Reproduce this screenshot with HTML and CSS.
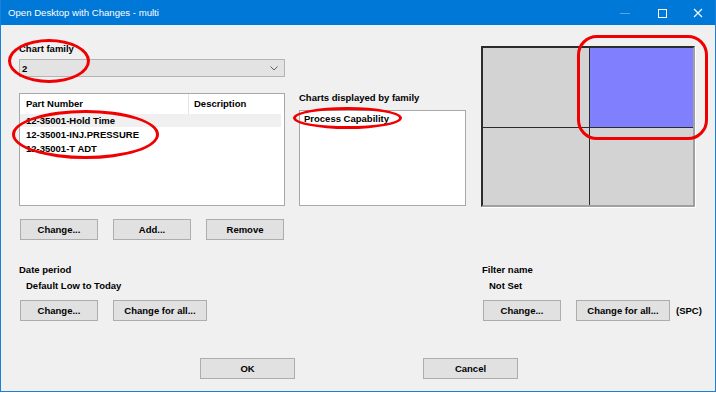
FILE: index.html
```html
<!DOCTYPE html>
<html lang="en">
<head>
    <meta charset="UTF-8">
    <title>Open Desktop with Changes - multi</title>
    <link rel="stylesheet" href="styles.css">
</head>
<body>

<div class="window">
    <div class="titlebar">
        <span class="title">Open Desktop with Changes - multi</span>
        <div class="controls">
            <span class="ctl minimize"><svg width="10" height="10" viewBox="0 0 10 10"><path d="M0 5.5h10" stroke="#5aa5e6" stroke-width="1"/></svg></span>
            <span class="ctl"><svg width="10" height="10" viewBox="0 0 10 10"><rect x="1.5" y="1.5" width="8" height="8" fill="none" stroke="#fff" stroke-width="1"/></svg></span>
            <span class="ctl"><svg width="10" height="10" viewBox="0 0 10 10"><path d="M1 1l8 8M9 1l-8 8" stroke="#fff" stroke-width="1.1"/></svg></span>
        </div>
    </div>

    <div class="client">
        <div class="top">
            <div class="col-left">
                <div class="label">Chart family</div>
                <div class="combo">
                    <span>2</span>
                    <svg width="8" height="5" viewBox="0 0 8 5"><path d="M0.5 0.5l3.5 3.5 3.5-3.5" fill="none" stroke="#606060" stroke-width="1"/></svg>
                </div>
                <div class="listview">
                    <div class="lv-header">
                        <div class="lv-col part">Part Number</div>
                        <div class="lv-col desc">Description</div>
                    </div>
                    <div class="lv-row selected">12-35001-Hold Time</div>
                    <div class="lv-row">12-35001-INJ.PRESSURE</div>
                    <div class="lv-row">12-35001-T ADT</div>
                </div>
                <div class="btn-row spread">
                    <button class="btn">Change...</button>
                    <button class="btn">Add...</button>
                    <button class="btn">Remove</button>
                </div>
            </div>

            <div class="col-mid">
                <div class="label">Charts displayed by family</div>
                <div class="listbox">
                    <div class="lb-item">Process Capability</div>
                </div>
            </div>

            <div class="col-right">
                <div class="layout">
                    <div class="cell"></div>
                    <div class="cell active"></div>
                    <div class="cell"></div>
                    <div class="cell"></div>
                </div>
            </div>
        </div>

        <div class="middle">
            <div class="group date">
                <div class="label">Date period</div>
                <div class="value">Default Low to Today</div>
                <div class="btn-row">
                    <button class="btn">Change...</button>
                    <button class="btn all">Change for all...</button>
                </div>
            </div>
            <div class="group filter">
                <div class="label">Filter name</div>
                <div class="value">Not Set</div>
                <div class="btn-row">
                    <button class="btn">Change...</button>
                    <button class="btn all">Change for all...</button>
                    <span class="note">(SPC)</span>
                </div>
            </div>
        </div>

        <div class="dialog-buttons">
            <button class="btn wide">OK</button>
            <button class="btn wide">Cancel</button>
        </div>
    </div>

    <!-- red annotation marks -->
    <div class="mark mark-family"></div>
    <div class="mark mark-parts"></div>
    <div class="mark mark-charts"></div>
    <div class="mark mark-cell"></div>
</div>

</body>
</html>
```

FILE: styles.css
```css
body {
    margin: 0;
    background: #ffffff;
    font-family: "Liberation Sans", Arial, sans-serif;
}
.window {
    position: relative;
    width: 716px;
    height: 392px;
    box-sizing: border-box;
    background-color: #f0f0f0;
    border: 1px solid #1a80d9;
    border-top: none;
    overflow: hidden;
}
.titlebar {
    height: 25px;
    margin: 0 -1px;
    background-color: #0078d7;
    display: flex;
    align-items: center;
    color: #fff;
}
.title {
    font-size: 9.6px;
    padding-left: 8px;
    flex: 1;
}
.controls {
    display: flex;
    height: 25px;
}
.ctl {
    width: 36px;
    display: flex;
    align-items: center;
    justify-content: center;
}
.ctl.minimize {
    width: 38px;
}
.client {
    padding-left: 18px;
    font-size: 9.5px;
    font-weight: bold;
    color: #000;
}
.label {
    height: 12px;
    line-height: 12px;
    white-space: nowrap;
}
.top {
    display: flex;
    margin-top: 18px;
}
.col-left {
    width: 266px;
}
.col-left .label {
    margin-bottom: 4px;
}
.combo {
    height: 18px;
    box-sizing: border-box;
    background-color: #e3e3e3;
    border: 1px solid #b4b4b4;
    display: flex;
    align-items: center;
    justify-content: space-between;
    padding: 0 6px 0 2px;
}
.listview {
    margin-top: 16px;
    height: 113px;
    box-sizing: border-box;
    background: #fff;
    border: 1px solid #a8a8a8;
    padding-right: 3px;
}
.lv-header {
    display: flex;
    height: 20px;
}
.lv-col {
    line-height: 20px;
    padding-left: 6px;
}
.lv-col.part {
    width: 162px;
    border-right: 1px solid #e5e5e5;
}
.lv-col.desc {
    padding-left: 5px;
}
.lv-row {
    height: 13.5px;
    line-height: 15px;
    padding-left: 6px;
}
.lv-row.selected {
    background-color: #f0f0f0;
    height: 13px;
    line-height: 14px;
}
.btn-row {
    display: flex;
    align-items: center;
    gap: 15px;
    margin-top: 8px;
}
.btn-row.spread {
    margin-top: 13px;
    padding-left: 1px;
}
.btn {
    width: 78px;
    height: 21px;
    box-sizing: border-box;
    background-color: #e1e1e1;
    border: 1px solid #adadad;
    font-family: "Liberation Sans", Arial, sans-serif;
    font-size: 9.5px;
    font-weight: bold;
    color: #000;
    padding: 0;
}
.btn.all {
    width: 94px;
}
.col-mid {
    width: 167px;
    margin-left: 14px;
    padding-top: 49px;
}
.col-mid .label {
    margin-bottom: 6px;
}
.listbox {
    height: 96px;
    box-sizing: border-box;
    background: #fff;
    border: 1px solid #a8a8a8;
}
.lb-item {
    padding: 1px 0 0 4px;
    line-height: 13px;
}
.col-right {
    margin-left: 15px;
    padding-top: 3px;
}
.layout {
    width: 214px;
    height: 161px;
    box-sizing: border-box;
    border: 2px solid #2b2b2b;
    border-right-color: #a0a0a0;
    border-bottom-color: #a0a0a0;
    background-color: #2b2b2b;
    display: grid;
    grid-template-columns: 106px 1fr;
    grid-template-rows: 79px 1fr;
    gap: 1px;
    box-shadow: 1px 1px 0 #ffffff;
}
.cell {
    background-color: #d3d3d3;
}
.cell.active {
    background-color: #8080ff;
}
.middle {
    display: flex;
    margin-top: 24px;
}
.group.date {
    width: 463px;
}
.value {
    margin-top: 4px;
    height: 12px;
    line-height: 12px;
    padding-left: 7px;
}
.group .btn-row {
    margin-top: 8px;
    padding-left: 1px;
}
.note {
    margin-left: -9px;
}
.dialog-buttons {
    display: flex;
    gap: 128px;
    margin-top: 37px;
    padding-left: 181px;
}
.btn.wide {
    width: 95px;
}
.mark {
    position: absolute;
    border: 3px solid #f00000;
    box-sizing: border-box;
    border-radius: 50%;
}
.mark-family {
    left: 7px;
    top: 39px;
    width: 82px;
    height: 44px;
}
.mark-parts {
    left: 11px;
    top: 110px;
    width: 147px;
    height: 49px;
}
.mark-charts {
    left: 292px;
    top: 107px;
    width: 109px;
    height: 22px;
}
.mark-cell {
    left: 576px;
    top: 35px;
    width: 131px;
    height: 105px;
    border-radius: 20px;
}
```
